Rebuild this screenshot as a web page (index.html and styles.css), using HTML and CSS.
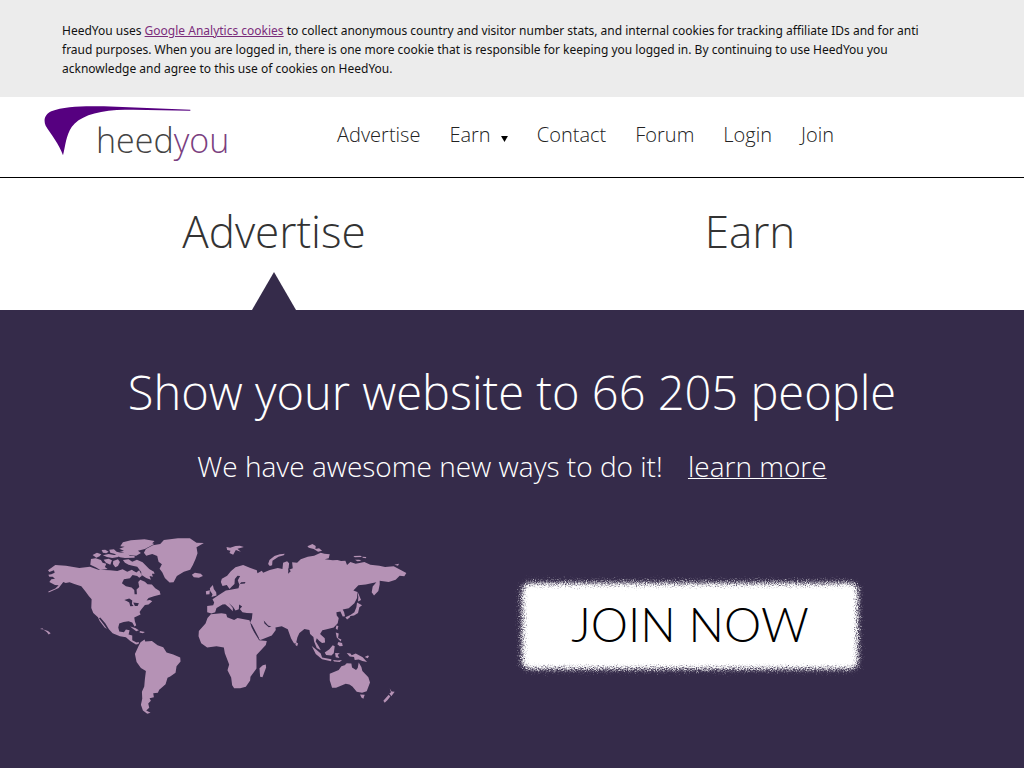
FILE: index.html
```html
<!DOCTYPE html>
<html lang="en">
<head>
  <meta charset="UTF-8">
  <meta name="viewport" content="width=device-width, initial-scale=1.0">
  <title>HeedYou</title>
  <link rel="stylesheet" href="styles.css">
</head>
<body>
  <div class="cookies">
    <p>HeedYou uses <a href="#">Google Analytics cookies</a> to collect anonymous country and visitor number stats, and internal cookies for tracking affiliate IDs and for anti fraud purposes. When you are logged in, there is one more cookie that is responsible for keeping you logged in. By continuing to use HeedYou you acknowledge and agree to this use of cookies on HeedYou.</p>
  </div>

  <header class="header">
    <div class="header-inner">
      <a class="logo" href="#">
        <svg class="swoosh" viewBox="0 0 450 150" aria-hidden="true">
          <path fill="#560080" d="M57 148 C46 114 20 84 5 59 C-3 40 4 25 22 16 C60 0 120 0 180 1 L439 11 L439 14 C360 14 290 9 218 12 C150 17 105 33 83 63 C66 88 64 120 57 148Z"/>
        </svg>
        <span class="logo-text">heed<span class="you">you</span></span>
      </a>
      <nav class="nav">
        <a href="#">Advertise</a>
        <a href="#">Earn <svg class="arrow" viewBox="0 0 8 7" aria-hidden="true"><path d="M0 0H8L4 7Z"/></svg></a>
        <a href="#">Contact</a>
        <a href="#">Forum</a>
        <a href="#">Login</a>
        <a href="#">Join</a>
      </nav>
    </div>
  </header>

  <div class="tabs">
    <a class="tab active" href="#">Advertise</a>
    <a class="tab" href="#">Earn</a>
  </div>

  <main class="main">
    <h1>Show your website to 66 205 people</h1>
    <p class="lead">We have awesome new ways to do it! <a href="#">learn more</a></p>
    <div class="bottom">
      <svg class="map" viewBox="30 22 1105 536" role="img" aria-label="World map">
        <!-- americas -->
        <path d="M54 122L76 106L108 108L148 115L180 111L205 120L240 122L262 124L278 119L292 126L306 120L318 129L328 122L336 138L328 144L322 139L308 136L300 146L282 149L276 161L288 170L305 174L313 181L314 194L321 194L320 180L328 172L325 157L331 150L345 156L353 164L366 165L376 176L389 184L392 195L372 200L356 205L350 213L360 211L367 215L356 225L345 226L334 240L329 247L332 255L313 264L315 276L319 287L314 291L307 279L296 275L281 277L268 282L265 294L268 306L282 308L288 300L299 302L296 315L307 318L307 332L320 339L327 337L326 343L318 345L301 334L288 323L270 320L248 311L237 299L226 281L211 264L207 266L221 284L231 298L224 294L209 274L204 263L190 250L184 235L185 209L177 200L166 185L154 170L133 163L119 158L107 160L100 157L86 175L56 189L55 186L76 177L86 167L75 166L65 161L58 157L64 149L75 147L68 141L58 141L55 135L64 134L74 129L72 122L58 127Z"/>
        <path d="M181 105L183 88L197 86L213 91L218 99L229 102L225 112L233 118L211 121L197 113Z"/>
        <path d="M188 76L201 69L214 74L209 80L199 84Z"/>
        <path d="M215 61L226 60L236 66L229 71L219 69Z"/>
        <path d="M219 77L236 73L252 76L268 76L265 82L247 85L231 82Z"/>
        <path d="M238 60L252 59L260 66L276 70L291 70L300 79L314 79L314 84L285 85L270 83L253 72L241 69Z"/>
        <path d="M221 90L236 87L246 92L241 105L228 99Z"/>
        <path d="M250 94L264 89L270 97L264 109L256 113L249 103Z"/>
        <path d="M271 50L279 38L303 32L344 29L374 34L367 41L373 43L345 58L324 63L333 70L319 78L298 77L281 69L269 67L282 63L268 57L284 51Z"/>
        <path d="M279 91L296 89L307 96L321 90L338 98L347 107L358 118L372 126L374 132L366 132L369 141L359 139L363 150L349 145L334 135L334 127L322 111L308 108L296 105L285 99Z"/>
        <path d="M306 123L319 128L312 136L305 131Z"/>
        <path d="M342 69L348 58L369 47L391 43L402 31L444 26L480 26L500 39L522 40L500 53L503 71L497 88L489 106L481 120L462 126L441 139L431 158L419 159L405 145L397 128L389 117L396 104L386 96L382 79L367 73L349 78Z"/>
        <path d="M486 135L495 129L513 132L519 139L507 144L492 143Z"/>
        <path d="M30 298L37 296L41 300ZM40 300L47 302L54 304L62 311L56 315L51 308Z"/>
        <path d="M315 373L326 349L332 338L344 330L346 336L366 334L383 347L400 353L410 369L430 375L451 384L452 396L440 410L437 430L421 441L413 445L407 464L396 474L388 481L384 490L370 491L372 503L359 506L363 514L355 522L358 535L349 543L362 550L352 553L339 543L333 526L337 508L336 487L343 471L345 448L348 424L333 415L320 397Z"/>
        <path d="M301 291L316 295L327 302L319 305L307 296ZM330 304L345 307L339 311L329 309Z"/>
        <path class="water" d="M283 211L298 207L307 213L306 223L311 229L301 230L298 219L290 214ZM310 219L327 221L323 229L315 229Z"/>
        <!-- europe, asia, africa and oceania -->
        <g transform="translate(480 0)">
          <path d="M93 157L96 147L112 138L123 125L137 113L160 106L180 114L201 122L203 131L216 123L220 129L240 121L264 115L278 118L280 99L292 95L298 101L296 121L309 116L307 98L322 99L333 89L354 81L373 78L393 69L404 72L420 74L417 86L405 89L429 92L443 91L454 94L467 93L472 106L482 97L498 102L524 97L542 105L569 108L586 112L612 110L629 119L650 130L644 140L630 138L618 150L597 157L570 153L570 165L566 184L553 198L546 188L549 171L560 158L549 160L528 165L506 167L491 183L503 187L502 205L494 221L477 236L459 240L463 247L466 260L459 261L452 246L440 248L441 258L447 265L444 281L432 294L408 300L398 302L391 313L405 326L406 339L397 340L389 334L381 326L378 336L387 350L393 362L381 355L373 336L371 322L361 313L359 301L344 298L329 310L323 323L319 340L313 342L304 327L294 299L276 290L257 294L258 301L246 318L212 331L205 327L192 300L181 279L186 268L188 251L171 250L158 248L150 238L157 231L148 225L147 239L137 243L130 232L117 220L129 235L129 245L118 234L106 224L98 225L80 235L76 248L65 252L52 248L52 229L70 227L73 219L68 209L87 196L108 183L118 181L130 179L146 176L149 165L146 159L144 152L151 139L143 138L135 148L134 163L126 171L119 178L111 166L98 169Z"/>
          <path class="water" d="M222 273L235 288L245 291L237 293L224 282ZM154 158L167 157L165 162L150 163ZM296 115L303 125L295 132ZM180 279L186 284L208 326L205 330L194 312Z"/>
          <path d="M63 254L95 251L109 253L112 263L133 271L143 265L179 272L185 292L193 308L208 332L231 334L228 346L200 376L200 417L182 442L181 453L168 472L151 476L133 476L127 467L124 444L113 422L118 405L105 371L102 354L80 350L52 354L34 341L26 320L27 304L47 282L53 265Z"/>
          <path d="M209 416L219 407L228 405L229 414L218 443L211 442Z"/>
          <path d="M60 176L69 166L72 178L79 188L80 198L65 202L68 194L61 184ZM48 185L60 182L59 194L49 195Z"/>
          <path d="M110 52L121 54L137 49L150 48L162 52L143 57L153 66L138 61L130 75L119 70L122 63L112 61Z"/>
          <path d="M235 103L239 91L254 79L270 74L285 72L282 77L266 81L248 93L247 107L240 109Z"/>
          <path d="M353 50L368 43L378 49L377 58L388 56L397 63L385 66L372 58L357 54Z"/>
          <path d="M491 79L512 78L517 82L495 83ZM518 81L530 82L528 86L519 84ZM496 90L509 90L515 94L503 95ZM614 105L628 102L625 108Z"/>
          <path d="M503 186L507 194L514 211L505 216L506 202ZM502 219L517 227L509 233L505 250L493 258L482 259L480 264L472 270L467 263L482 256L494 248L500 233Z"/>
          <path d="M318 337L325 342L322 350L317 346ZM440 288L446 289L443 301L438 297ZM366 349L379 360L393 372L397 384L425 389L424 395L397 389L378 373Z"/>
          <path d="M405 369L419 359L429 347L435 350L432 371L425 378L409 376ZM438 309L447 312L445 325L455 330L453 336L441 324ZM446 337L457 340L459 349L450 350L443 344ZM436 370L450 371L444 376L449 385L438 383Z"/>
          <path d="M430 391L444 393L457 391L450 397L433 396ZM471 370L482 372L486 377L498 372L519 383L532 397L518 394L507 390L495 391L493 382L480 381ZM525 382L534 378L538 379L534 386Z"/>
          <path d="M420 433L447 421L455 410L465 407L471 401L485 402L487 414L499 421L504 415L507 399L515 412L518 424L536 443L541 459L531 485L517 490L501 487L488 471L479 465L468 463L439 475L427 475L420 452ZM511 495L525 496L521 508L515 504Z"/>
          <path d="M600 477L606 486L615 487L605 500L599 492L604 488ZM597 496L602 501L593 512L585 520L581 514Z"/>
        </g>
      </svg>
      <div class="join-wrap">
        <button class="join" type="button">JOIN NOW</button>
      </div>
    </div>
  </main>

  <svg class="filters" width="0" height="0" aria-hidden="true">
    <filter id="spray" x="-5%" y="-15%" width="110%" height="130%" color-interpolation-filters="sRGB">
      <feGaussianBlur in="SourceGraphic" stdDeviation="2" result="soft"/>
      <feTurbulence type="fractalNoise" baseFrequency="0.9" numOctaves="2" seed="3" result="noise"/>
      <feDisplacementMap in="soft" in2="noise" scale="12" xChannelSelector="R" yChannelSelector="G"/>
    </filter>
  </svg>
</body>
</html>
```
FILE: styles.css
```css
* {
  box-sizing: border-box;
}
body {
  margin: 0;
  font-family: "Open Sans", "Noto Sans", sans-serif;
  font-weight: 300;
  color: #333;
  background-color: #352b4a;
}
p, h1 {
  margin: 0;
}
.cookies {
  background-color: #ececec;
  padding: 21px 24px 19px;
}
.cookies p {
  max-width: 900px;
  margin: 0 auto;
  padding-right: 16px;
  font-family: "Noto Sans", sans-serif;
  font-size: 12px;
  font-weight: 400;
  line-height: 19px;
  color: #111;
}
.cookies a {
  color: #7b2d7b;
}
.header {
  background-color: white;
  border-bottom: 1px solid black;
}
.header-inner {
  display: flex;
  max-width: 944px;
  height: 80px;
  margin: 0 auto;
  padding-left: 4px;
}
.logo {
  display: grid;
  width: 184px;
  margin-right: 109px;
  color: #444;
  text-decoration: none;
}
.swoosh {
  grid-area: 1 / 1;
  width: 150px;
  height: 50px;
  margin-top: 9px;
}
.logo-text {
  grid-area: 1 / 1;
  padding: 18px 0 0 52px;
  font-size: 34px;
  line-height: 50px;
}
.you {
  color: #7b3f80;
}
.nav {
  display: flex;
  gap: 29px;
  padding-top: 23px;
  font-size: 20px;
  line-height: 30px;
}
.nav a {
  color: #222;
  text-decoration: none;
  white-space: nowrap;
}
.arrow {
  width: 7px;
  height: 6px;
  margin-left: 5px;
}
.tabs {
  display: flex;
  padding: 0 36px;
  background-color: white;
}
.tab {
  flex: 1;
  display: flex;
  flex-direction: column;
  align-items: center;
  height: 132px;
  padding-top: 22px;
  font-size: 44px;
  line-height: 62px;
  color: #333;
  text-decoration: none;
}
.active::after {
  content: "";
  width: 44px;
  height: 38px;
  margin-top: auto;
  background-color: #352b4a;
  clip-path: polygon(50% 0, 100% 100%, 0 100%);
}
.main {
  padding: 48px 40px;
  color: white;
  text-align: center;
}
h1 {
  font-size: 47px;
  font-weight: 300;
  line-height: 68px;
}
.lead {
  margin-top: 20px;
  font-size: 28px;
  line-height: 40px;
}
.lead a {
  margin-left: 18px;
  color: white;
  text-decoration-thickness: 1px;
}
.bottom {
  display: flex;
  align-items: center;
  margin-top: 51px;
}
.map {
  width: 368px;
  fill: #b592b5;
}
.water {
  fill: #352b4a;
}
.join-wrap {
  flex: 1;
  padding-left: 112px;
  text-align: left;
}
.join {
  position: relative;
  z-index: 0;
  width: 340px;
  height: 90px;
  padding: 0 0 4px;
  border: none;
  background: none;
  font-family: Lato, sans-serif;
  font-size: 47px;
  font-weight: 300;
  color: black;
  cursor: pointer;
}
/* sprayed edge behind the label */
.join::before {
  content: "";
  position: absolute;
  inset: 2px;
  z-index: -1;
  border-radius: 8px;
  background-color: white;
  filter: url(#spray);
}
.filters {
  position: absolute;
}
```
